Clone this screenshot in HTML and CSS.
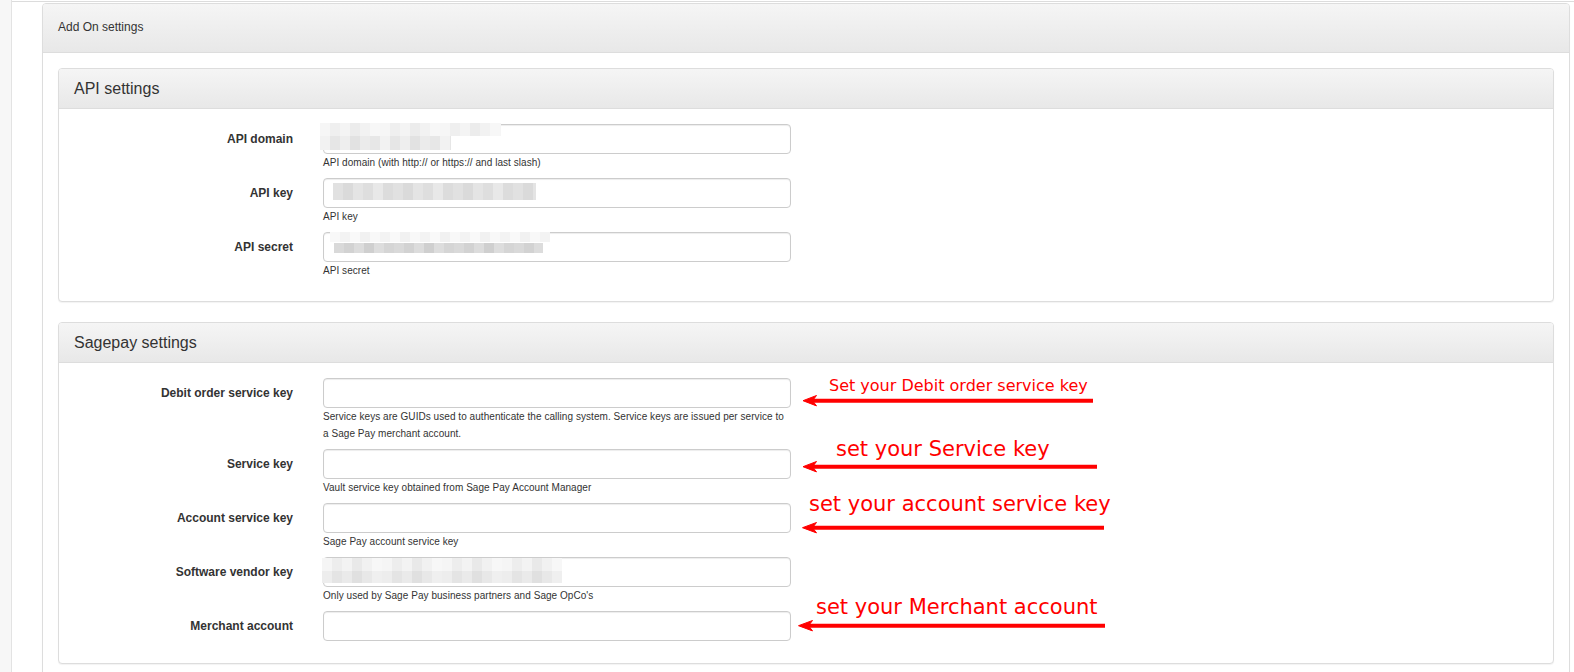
FILE: index.html
```html
<!DOCTYPE html>
<html lang="en">
<head>
<meta charset="utf-8">
<title>Add On settings</title>
<link rel="stylesheet" href="styles.css">
</head>
<body>
<div class="layout">
  <aside class="sidebar"></aside>
  <main class="main">
    <section class="panel panel-outer">
      <div class="panel-heading heading-outer">Add On settings</div>
      <div class="panel-body">

        <section class="panel">
          <div class="panel-heading"><h3 class="panel-title">API settings</h3></div>
          <div class="panel-body form">
            <div class="form-row">
              <label class="form-label">API domain</label>
              <div class="field">
                <input type="text" class="form-control">
                <div class="mask mask-domain-a"></div>
                <div class="mask mask-domain-b"></div>
                <p class="help">API domain (with http:// or https:// and last slash)</p>
              </div>
            </div>
            <div class="form-row">
              <label class="form-label">API key</label>
              <div class="field">
                <input type="text" class="form-control">
                <div class="mask mask-key"></div>
                <p class="help">API key</p>
              </div>
            </div>
            <div class="form-row">
              <label class="form-label">API secret</label>
              <div class="field">
                <input type="text" class="form-control">
                <div class="mask mask-secret-a"></div>
                <div class="mask mask-secret-b"></div>
                <p class="help">API secret</p>
              </div>
            </div>
          </div>
        </section>

        <section class="panel">
          <div class="panel-heading"><h3 class="panel-title">Sagepay settings</h3></div>
          <div class="panel-body form">
            <div class="form-row">
              <label class="form-label">Debit order service key</label>
              <div class="field">
                <input type="text" class="form-control">
                <p class="help">Service keys are GUIDs used to authenticate the calling system. Service keys are issued per service to a Sage Pay merchant account.</p>
              </div>
            </div>
            <div class="form-row">
              <label class="form-label">Service key</label>
              <div class="field">
                <input type="text" class="form-control">
                <p class="help">Vault service key obtained from Sage Pay Account Manager</p>
              </div>
            </div>
            <div class="form-row">
              <label class="form-label">Account service key</label>
              <div class="field">
                <input type="text" class="form-control">
                <p class="help">Sage Pay account service key</p>
              </div>
            </div>
            <div class="form-row">
              <label class="form-label">Software vendor key</label>
              <div class="field">
                <input type="text" class="form-control">
                <div class="mask mask-vendor-a"></div>
                <div class="mask mask-vendor-b"></div>
                <p class="help">Only used by Sage Pay business partners and Sage OpCo's</p>
              </div>
            </div>
            <div class="form-row">
              <label class="form-label">Merchant account</label>
              <div class="field">
                <input type="text" class="form-control">
              </div>
            </div>
          </div>
        </section>

      </div>
    </section>
  </main>
</div>

<div class="annotations">
  <div class="note note-1">Set your Debit order service key</div>
  <div class="note note-big note-2">set your Service key</div>
  <div class="note note-big note-3">set your account service key</div>
  <div class="note note-big note-4">set your Merchant account</div>
  <svg class="arrows" width="1574" height="672" viewBox="0 0 1574 672" xmlns="http://www.w3.org/2000/svg">
    <g fill="#ff0000" stroke="#ff0000">
      <line x1="810" y1="400.7" x2="1093" y2="400.7" stroke-width="4"/>
      <path d="M803 400.7 L816.5 395.5 L812.5 400.7 L816.5 405.9 Z" stroke-width="1"/>
      <line x1="810" y1="466.7" x2="1097" y2="466.7" stroke-width="4"/>
      <path d="M803 466.7 L816.5 461.5 L812.5 466.7 L816.5 471.9 Z" stroke-width="1"/>
      <line x1="810" y1="527.7" x2="1104" y2="527.7" stroke-width="4"/>
      <path d="M802.5 527.7 L816.5 522.5 L812.5 527.7 L816.5 532.9 Z" stroke-width="1"/>
      <line x1="806" y1="625.7" x2="1105" y2="625.7" stroke-width="4"/>
      <path d="M798.5 625.7 L812.5 620.5 L808.5 625.7 L812.5 630.9 Z" stroke-width="1"/>
    </g>
  </svg>
</div>
</body>
</html>
```

FILE: styles.css
```css
html, body {
  margin: 0;
  padding: 0;
  overflow: hidden;
  background: #ffffff;
}

body {
  position: relative;
  font-family: "Liberation Sans", Arial, sans-serif;
  color: #333333;
  font-size: 12px;
}

.layout {
  display: flex;
  min-height: 100vh;
}

.sidebar {
  flex: 0 0 11px;
  background: #f7f7f7;
  border-right: 1px solid #e3e3e3;
}

.main {
  flex: 1 1 auto;
  margin-top: 1px;
  border-top: 1px solid #dcdcdc;
  padding: 1px 4px 0 30px;
}

.panel {
  background: #ffffff;
  border: 1px solid #dddddd;
  border-radius: 4px;
  box-shadow: 0 1px 1px rgba(0, 0, 0, 0.05);
  margin-bottom: 20px;
}

.panel-heading {
  background: linear-gradient(to bottom, #f5f5f5 0%, #e8e8e8 100%);
  border-bottom: 1px solid #dddddd;
  border-radius: 3px 3px 0 0;
  padding: 10px 15px;
}

.heading-outer {
  padding: 16px 15px 17px;
  font-size: 12px;
  line-height: 15px;
  color: #333333;
}

.panel-title {
  margin: 0;
  font-size: 16px;
  line-height: 19px;
  font-weight: normal;
  color: #333333;
}

.panel-body {
  padding: 15px;
}

.form-row {
  display: grid;
  grid-template-columns: 219px 468px;
  column-gap: 30px;
  margin-bottom: 7px;
}

.form-label {
  text-align: right;
  font-weight: bold;
  font-size: 12px;
  line-height: 17px;
  padding-top: 7px;
  color: #333333;
}

.field {
  position: relative;
}

.form-control {
  display: block;
  box-sizing: border-box;
  width: 100%;
  height: 30px;
  margin: 0;
  padding: 5px 10px;
  border: 1px solid #cccccc;
  border-radius: 4px;
  background: #ffffff;
  box-shadow: inset 0 1px 1px rgba(0, 0, 0, 0.075);
  font-family: inherit;
  font-size: 12px;
}

.help {
  margin: 0;
  font-size: 10px;
  line-height: 17px;
  letter-spacing: 0.05px;
  color: #333333;
}

/* pixelated privacy blur over filled values */
.mask {
  position: absolute;
}

.mask-domain-a {
  left: -3px;
  top: -1px;
  width: 181px;
  height: 13px;
  background: repeating-linear-gradient(90deg,
    #f6f6f6 0 10px, #efefef 10px 20px, #f4f4f4 20px 30px,
    #ececec 30px 40px, #f2f2f2 40px 50px, #f7f7f7 50px 60px);
}

.mask-domain-b {
  left: -3px;
  top: 12px;
  width: 131px;
  height: 14px;
  background: repeating-linear-gradient(90deg,
    #f2f2f2 0 10px, #e6e6e6 10px 20px, #eeeeee 20px 30px,
    #e2e2e2 30px 40px, #ebebeb 40px 50px, #e7e7e7 50px 60px);
}

.mask-key {
  left: 10px;
  top: 5px;
  width: 203px;
  height: 17px;
  background: repeating-linear-gradient(90deg,
    #e1e1e1 0 10px, #dadada 10px 20px, #e4e4e4 20px 30px,
    #dedede 30px 40px, #e8e8e8 40px 50px, #dcdcdc 50px 60px);
}

.mask-secret-a {
  left: 7px;
  top: 0;
  width: 220px;
  height: 10px;
  background: repeating-linear-gradient(90deg,
    #f8f8f8 0 10px, #f3f3f3 10px 20px, #f9f9f9 20px 30px, #f1f1f1 30px 40px);
}

.mask-secret-b {
  left: 11px;
  top: 11px;
  width: 209px;
  height: 10px;
  background: repeating-linear-gradient(90deg,
    #d9d9d9 0 10px, #d2d2d2 10px 20px, #dcdcdc 20px 30px,
    #cfcfcf 30px 40px, #dddddd 40px 50px, #d5d5d5 50px 60px);
}

.mask-vendor-a {
  left: -1px;
  top: 1px;
  width: 240px;
  height: 13px;
  background: repeating-linear-gradient(90deg,
    #f5f5f5 0 10px, #ededed 10px 20px, #f3f3f3 20px 30px,
    #e9e9e9 30px 40px, #f1f1f1 40px 50px, #f7f7f7 50px 60px);
}

.mask-vendor-b {
  left: -1px;
  top: 14px;
  width: 240px;
  height: 12px;
  background: repeating-linear-gradient(90deg,
    #ededed 0 10px, #e4e4e4 10px 20px, #eaeaea 20px 30px,
    #e0e0e0 30px 40px, #e8e8e8 40px 50px, #efefef 50px 60px);
}

/* red annotation overlay */
.annotations {
  position: absolute;
  left: 0;
  top: 0;
  width: 1574px;
  height: 672px;
  pointer-events: none;
}

.arrows {
  position: absolute;
  left: 0;
  top: 0;
}

.note {
  position: absolute;
  font-family: "DejaVu Sans", sans-serif;
  color: #ff0000;
  font-size: 16px;
  line-height: 1;
  white-space: nowrap;
}

.note-big {
  font-size: 21px;
}

.note-1 { left: 829px; top: 378px; }
.note-2 { left: 836px; top: 439px; }
.note-3 { left: 809px; top: 494px; }
.note-4 { left: 816px; top: 597px; }
```
